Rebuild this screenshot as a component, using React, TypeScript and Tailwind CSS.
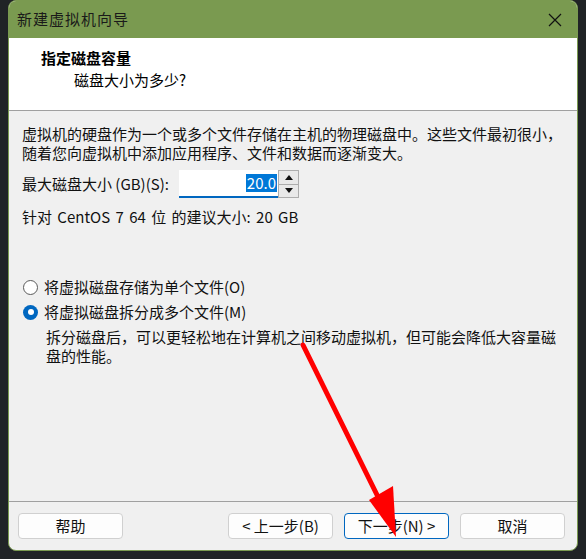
import React from 'react';

const font = { fontFamily: '"Noto Sans CJK SC", "Noto Sans", sans-serif' };

function Radio({ checked, label }: { checked?: boolean; label: string }) {
  return (
    <div className="flex items-center h-[20px]">
      {checked ? (
        <span className="w-[15px] h-[15px] rounded-full bg-[#0067c0] flex items-center justify-center">
          <span className="w-[6px] h-[6px] rounded-full bg-white" />
        </span>
      ) : (
        <span className="w-[15px] h-[15px] rounded-full border border-[#5a5a5a] bg-white" />
      )}
      <span className="ml-[6px] text-[15px] text-[#111]">{label}</span>
    </div>
  );
}

function Btn({ children, primary, className }: { children: React.ReactNode; primary?: boolean; className?: string }) {
  return (
    <button
      className={`h-[26px] w-[105px] rounded-[4px] bg-[#fdfdfd] text-[15px] leading-[24px] text-[#111] border ${
        primary ? 'border-[#0067c0]' : 'border-[#d0d0d0]'
      } ${className ?? ''}`}
    >
      {children}
    </button>
  );
}

export default function App() {
  return (
    <div className="relative w-[586px] h-[559px] bg-[#202326] pl-[8px]" style={font}>
      <div className="w-[570px] h-[551px] rounded-[8px] overflow-hidden border border-[#7a9a50] bg-[#f0f0f0] flex flex-col">
        {/* Title bar */}
        <div className="h-[37px] shrink-0 bg-[#7a9a50] flex items-center justify-between pl-[8px] pr-[15px]">
          <span className="text-[15px] text-[#1a1a1a] tracking-[1px]">新建虚拟机向导</span>
          <svg width="14" height="14" viewBox="0 0 14 14">
            <path d="M1 1 L13 13 M13 1 L1 13" stroke="#111" strokeWidth="1.2" />
          </svg>
        </div>

        {/* Header */}
        <div className="h-[73px] shrink-0 bg-white border-b border-[#a0a0a0] pt-[9px]">
          <div className="pl-[32px] text-[15px] font-bold leading-[22px] text-[#000]">指定磁盘容量</div>
          <div className="pl-[65px] text-[15px] leading-[22px] text-[#000]">磁盘大小为多少?</div>
        </div>

        {/* Body */}
        <div className="flex-1 pl-[13px] pt-[13px] text-[15px] text-[#111]">
          <p className="leading-[19px] whitespace-nowrap">
            虚拟机的硬盘作为一个或多个文件存储在主机的物理磁盘中。这些文件最初很小，
            <br />
            随着您向虚拟机中添加应用程序、文件和数据而逐渐变大。
          </p>

          <div className="flex items-center mt-[8px] h-[28px]">
            <span className="w-[157px]">最大磁盘大小 (GB)(S):</span>
            <div className="w-[99px] h-[28px] bg-white border-b-2 border-[#0067c0] flex items-center justify-end pr-[1px]">
              <span className="bg-[#0078d7] text-white leading-[18px] px-[1px]">20.0</span>
            </div>
            <div className="w-[21px] h-[28px] border border-[#adadad] bg-[#e9e9e9] flex flex-col">
              <div className="flex-1 flex items-center justify-center border-b border-[#adadad]">
                <svg width="8" height="5" viewBox="0 0 8 5"><path d="M0 5 L4 0 L8 5 Z" fill="#111" /></svg>
              </div>
              <div className="flex-1 flex items-center justify-center">
                <svg width="8" height="5" viewBox="0 0 8 5"><path d="M0 0 L4 5 L8 0 Z" fill="#111" /></svg>
              </div>
            </div>
          </div>

          <div className="mt-[9px] leading-[20px] [word-spacing:2px]">针对 CentOS 7 64 位 的建议大小: 20 GB</div>

          <div className="mt-[50px] pl-[1px]">
            <Radio label="将虚拟磁盘存储为单个文件(O)" />
            <div className="mt-[5px]">
              <Radio checked label="将虚拟磁盘拆分成多个文件(M)" />
            </div>
            <p className="mt-[5px] pl-[23px] leading-[19px] whitespace-nowrap">
              拆分磁盘后，可以更轻松地在计算机之间移动虚拟机，但可能会降低大容量磁
              <br />
              盘的性能。
            </p>
          </div>
        </div>

        {/* Footer */}
        <div className="h-[49px] shrink-0 border-t border-[#a0a0a0] flex items-start pt-[11px] pl-[9px] pr-[12px]">
          <Btn>帮助</Btn>
          <div className="flex-1" />
          <Btn>&lt; 上一步(B)</Btn>
          <Btn primary className="ml-[11px]">下一步(N) &gt;</Btn>
          <Btn className="ml-[11px]">取消</Btn>
        </div>
      </div>

      {/* Red annotation arrow */}
      <svg className="absolute left-0 top-0 pointer-events-none" width="586" height="559" viewBox="0 0 586 559">
        <line x1="303" y1="345" x2="382" y2="505" stroke="#ff0000" strokeWidth="5" strokeLinecap="round" />
        <polygon points="369,500 393,486 396,537" fill="#ff0000" />
      </svg>
    </div>
  );
}
